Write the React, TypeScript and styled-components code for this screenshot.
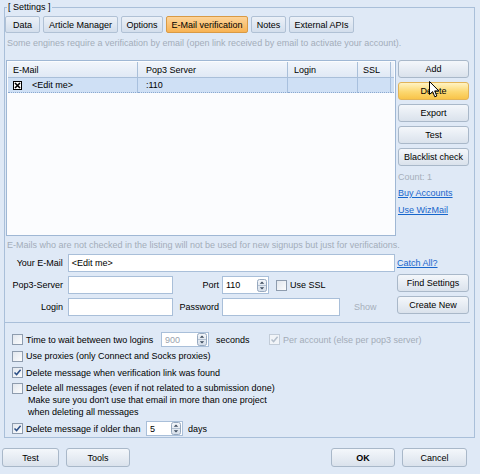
import React from "react";
import styled, { createGlobalStyle, css } from "styled-components";

const GlobalStyle = createGlobalStyle`
  html, body { margin: 0; padding: 0; }
  body {
    background: #dfe9f6;
    font-family: "Liberation Sans", Arial, sans-serif;
    font-size: 9px;
    color: #000;
  }
  * { box-sizing: border-box; }
`;

const Window = styled.div`
  width: 480px;
  height: 474px;
  overflow: hidden;
  display: flex;
  flex-direction: column;
  padding-top: 2px;
`;

const Group = styled.fieldset`
  margin: 0 5px 0 4px;
  padding: 0;
  min-width: 0;
  height: 436px;
  border: 1px solid #a9bfd9;
  display: flex;
  flex-direction: column;
`;

const Legend = styled.legend`
  margin-left: 2px;
  padding: 0 1px;
  line-height: 11px;
  font-size: 9px;
`;

const TabBar = styled.div`
  display: flex;
  gap: 3px;
  margin-top: 3px;
  height: 17px;
`;

const Tab = styled.div<{ $w: number; $active?: boolean }>`
  width: ${(p) => p.$w}px;
  height: 17px;
  display: flex;
  align-items: center;
  justify-content: center;
  border: 1px solid #b0c1d5;
  border-radius: 2px;
  background: linear-gradient(#ecf1f8, #d3deec);
  white-space: nowrap;
  ${(p) =>
    p.$active &&
    css`
      border-color: #d99a45;
      background: linear-gradient(#fdd49a, #f8b354);
    `}
`;

const Hint = styled.div<{ $mt: number }>`
  margin: ${(p) => p.$mt}px 0 0 2px;
  line-height: 12px;
  color: #a3adba;
  white-space: nowrap;
`;

const MainRow = styled.div`
  display: flex;
  margin: 11px 0 0 1px;
  height: 176px;
  gap: 2px;
`;

const Table = styled.div`
  width: 390px;
  height: 176px;
  border: 1px solid #9fb7d4;
  background: #fbfcfe;
  padding: 1px;
  display: flex;
  flex-direction: column;
`;

const GridRow = styled.div<{ $header?: boolean }>`
  display: grid;
  grid-template-columns: 130px 150px 70px 33px 1fr;
  height: ${(p) => (p.$header ? 16 : 15)}px;
`;

const HeadCell = styled.div<{ $pad: number }>`
  display: flex;
  align-items: center;
  padding-left: ${(p) => p.$pad}px;
  border-right: 1px solid #a9bfd9;
  border-bottom: 1px solid #a9bfd9;
  background: linear-gradient(#f1f5fb, #e0e9f5);
`;

const HeadFill = styled.div`
  border-bottom: 1px solid #a9bfd9;
  background: linear-gradient(#f1f5fb, #e0e9f5);
`;

const Cell = styled.div<{ $pad: number }>`
  display: flex;
  align-items: center;
  gap: 10px;
  padding-left: ${(p) => p.$pad}px;
  background: #cfe0f5;
  border-right: 1px solid #a8c0de;
  border-bottom: 1px dotted #8aa8cf;
`;

const CellFill = styled.div`
  background: #cfe0f5;
  border-bottom: 1px dotted #8aa8cf;
`;

const XBox = styled.svg`
  width: 9px;
  height: 9px;
  flex: none;
`;

const SideCol = styled.div`
  width: 71px;
  display: flex;
  flex-direction: column;
`;

const Button = styled.div<{ $w?: number; $h?: number; $hot?: boolean; $bold?: boolean }>`
  position: relative;
  width: ${(p) => (p.$w ? `${p.$w}px` : "100%")};
  height: ${(p) => p.$h ?? 18}px;
  display: flex;
  align-items: center;
  justify-content: center;
  border: 1px solid #a9b8c9;
  border-radius: 3px;
  background: linear-gradient(#f4f7fb, #dae2ec);
  white-space: nowrap;
  font-weight: ${(p) => (p.$bold ? 700 : 400)};
  ${(p) =>
    p.$hot &&
    css`
      border-color: #e2b458;
      background: linear-gradient(#fff3c4, #fcd870 55%, #f8c449);
    `}
`;

const ButtonStack = styled.div`
  display: flex;
  flex-direction: column;
  gap: 4px;
`;

const Muted = styled.div<{ $mt?: number }>`
  margin-top: ${(p) => p.$mt ?? 0}px;
  color: #a6afbb;
  line-height: 11px;
`;

const Link = styled.a<{ $mt?: number }>`
  display: block;
  margin-top: ${(p) => p.$mt ?? 0}px;
  color: #1766cc;
  text-decoration: underline;
  line-height: 11px;
  white-space: nowrap;
`;

const Cursor = styled.svg`
  position: absolute;
  left: 30px;
  top: -2px;
  width: 11px;
  height: 17px;
`;

const FormArea = styled.div`
  display: flex;
  gap: 2px;
  margin-top: 3px;
`;

const FormRows = styled.div`
  width: 390px;
  display: flex;
  flex-direction: column;
  gap: 4px;
`;

const FormRow = styled.div`
  display: flex;
  align-items: center;
  height: 18px;
`;

const Label = styled.div<{ $w: number; $gap: number }>`
  width: ${(p) => p.$w}px;
  margin-right: ${(p) => p.$gap}px;
  text-align: right;
  white-space: nowrap;
`;

const TextBox = styled.div<{ $w: number }>`
  width: ${(p) => p.$w}px;
  height: 18px;
  border: 1px solid #a9bfd9;
  background: #fff;
  display: flex;
  align-items: center;
  padding-left: 3px;
  white-space: nowrap;
`;

const SpinBox = styled.div<{ $w: number; $h?: number; $dim?: boolean }>`
  width: ${(p) => p.$w}px;
  height: ${(p) => p.$h ?? 18}px;
  border: 1px solid #a9bfd9;
  background: #fff;
  display: flex;
  align-items: center;
  padding: 0 1px 0 3px;
  color: ${(p) => (p.$dim ? "#9aa3ae" : "#000")};
`;

const SpinValue = styled.span`
  flex: 1;
`;

const Spinner = styled.svg`
  width: 10px;
  height: 13px;
  flex: none;
`;

const SideForm = styled.div`
  width: 72px;
  display: flex;
  flex-direction: column;
`;

const LinkRow = styled.div`
  height: 18px;
  display: flex;
  align-items: center;
  margin-bottom: 2px;
`;

const CheckWrap = styled.label<{ $ml?: number; $disabled?: boolean }>`
  display: flex;
  align-items: center;
  gap: 3px;
  margin-left: ${(p) => p.$ml ?? 0}px;
  color: ${(p) => (p.$disabled ? "#a3acb8" : "#000")};
  white-space: nowrap;
`;

const Box = styled.span<{ $disabled?: boolean }>`
  width: 11px;
  height: 11px;
  flex: none;
  border: 1px solid ${(p) => (p.$disabled ? "#c2ccd8" : "#8e9cae")};
  background: ${(p) => (p.$disabled ? "#f1f4f8" : "linear-gradient(135deg, #e2e7ee, #fbfcfd)")};
  display: flex;
  align-items: center;
  justify-content: center;
`;

const Divider = styled.div`
  height: 1px;
  background: #a9bfd9;
  margin: 6px 4px 0 0;
`;

const Options = styled.div`
  display: flex;
  flex-direction: column;
  margin: 8px 0 0 7px;
`;

const OptRow = styled.div<{ $h: number }>`
  display: flex;
  align-items: center;
  height: ${(p) => p.$h}px;
`;

const FixedText = styled.span<{ $w: number }>`
  width: ${(p) => p.$w}px;
  flex: none;
  white-space: nowrap;
`;

const MultiRow = styled.div`
  display: flex;
  align-items: flex-start;
  gap: 3px;
  margin-top: 1px;
  line-height: 12px;
`;

const BoxSlot = styled.span`
  padding-top: 1px;
  display: flex;
`;

const MultiText = styled.div`
  display: flex;
  flex-direction: column;
`;

const Indented = styled.span`
  padding-left: 2px;
`;

const BottomBar = styled.div`
  display: flex;
  align-items: center;
  margin: 10px 0 0 2px;
  gap: 7px;
`;

const Spacer = styled.div`
  flex: 1;
`;

const Check = ({ disabled }: { disabled?: boolean }) => (
  <svg width="9" height="9" viewBox="0 0 9 9">
    <path d="M1.5 4.5 L3.6 6.6 L7.6 1.8" fill="none" stroke={disabled ? "#b4bfcc" : "#2c4f86"} strokeWidth="1.5" />
  </svg>
);

const CheckBox = ({
  checked,
  disabled,
  children,
  ml,
}: {
  checked?: boolean;
  disabled?: boolean;
  children?: React.ReactNode;
  ml?: number;
}) => (
  <CheckWrap $ml={ml} $disabled={disabled}>
    <Box $disabled={disabled}>{checked && <Check disabled={disabled} />}</Box>
    {children}
  </CheckWrap>
);

const SpinArrows = () => (
  <Spinner viewBox="0 0 10 13">
    <defs>
      <linearGradient id="sg" x1="0" y1="0" x2="0" y2="1">
        <stop offset="0" stopColor="#f3f6fa" />
        <stop offset="1" stopColor="#d5dee9" />
      </linearGradient>
    </defs>
    <rect x="0.5" y="0.5" width="9" height="12" rx="2" fill="url(#sg)" stroke="#97a9bf" />
    <line x1="1" y1="6.5" x2="9" y2="6.5" stroke="#b3c1d2" />
    <path d="M2.8 4.8 L5 2.6 L7.2 4.8 Z" fill="#3b4a5c" />
    <path d="M2.8 8.2 L5 10.4 L7.2 8.2 Z" fill="#3b4a5c" />
  </Spinner>
);

const Spin = ({ w, h, value, dim }: { w: number; h?: number; value: string; dim?: boolean }) => (
  <SpinBox $w={w} $h={h} $dim={dim}>
    <SpinValue>{value}</SpinValue>
    <SpinArrows />
  </SpinBox>
);

export default function App() {
  return (
    <>
      <GlobalStyle />
      <Window>
        <Group>
          <Legend>[ Settings ]</Legend>
          <TabBar>
            <Tab $w={35}>Data</Tab>
            <Tab $w={75}>Article Manager</Tab>
            <Tab $w={42}>Options</Tab>
            <Tab $w={82} $active>
              E-Mail verification
            </Tab>
            <Tab $w={35}>Notes</Tab>
            <Tab $w={65}>External APIs</Tab>
          </TabBar>
          <Hint $mt={4}>
            Some engines require a verification by email (open link received by email to activate your account).
          </Hint>
          <MainRow>
            <Table>
              <GridRow $header>
                <HeadCell $pad={5}>E-Mail</HeadCell>
                <HeadCell $pad={8}>Pop3 Server</HeadCell>
                <HeadCell $pad={6}>Login</HeadCell>
                <HeadCell $pad={5}>SSL</HeadCell>
                <HeadFill />
              </GridRow>
              <GridRow>
                <Cell $pad={5}>
                  <XBox viewBox="0 0 9 9">
                    <rect x="0.5" y="0.5" width="8" height="8" fill="#fff" stroke="#000" />
                    <path d="M2 2 L7 7 M7 2 L2 7" stroke="#000" strokeWidth="1.6" />
                  </XBox>
                  &lt;Edit me&gt;
                </Cell>
                <Cell $pad={8}>:110</Cell>
                <Cell $pad={6} />
                <Cell $pad={5} />
                <CellFill />
              </GridRow>
            </Table>
            <SideCol>
              <ButtonStack>
                <Button>Add</Button>
                <Button $hot>
                  Delete
                  <Cursor viewBox="0 0 11 17">
                    <path
                      d="M0.5 0.5 L0.5 13.5 L3.6 10.6 L5.8 15.8 L7.8 15 L5.7 9.9 L9.8 9.9 Z"
                      fill="#fff"
                      stroke="#000"
                      strokeWidth="1"
                      strokeLinejoin="round"
                    />
                  </Cursor>
                </Button>
                <Button>Export</Button>
                <Button>Test</Button>
                <Button>Blacklist check</Button>
              </ButtonStack>
              <Muted $mt={6}>Count: 1</Muted>
              <Link $mt={5}>Buy Accounts</Link>
              <Link $mt={6}>Use WizMail</Link>
            </SideCol>
          </MainRow>
          <Hint $mt={3}>E-Mails who are not checked in the listing will not be used for new signups but just for verifications.</Hint>
          <FormArea>
            <FormRows>
              <FormRow>
                <Label $w={58} $gap={5}>Your E-Mail</Label>
                <TextBox $w={328}>&lt;Edit me&gt;</TextBox>
              </FormRow>
              <FormRow>
                <Label $w={58} $gap={5}>Pop3-Server</Label>
                <TextBox $w={105} />
                <Label $w={46} $gap={3}>Port</Label>
                <Spin w={47} value="110" />
                <CheckBox ml={7}>Use SSL</CheckBox>
              </FormRow>
              <FormRow>
                <Label $w={58} $gap={5}>Login</Label>
                <TextBox $w={105} />
                <Label $w={46} $gap={3}>Password</Label>
                <TextBox $w={118} />
                <Muted $mt={0} style={{ marginLeft: 14 }}>Show</Muted>
              </FormRow>
            </FormRows>
            <SideForm>
              <LinkRow>
                <Link>Catch All?</Link>
              </LinkRow>
              <ButtonStack>
                <Button>Find Settings</Button>
                <Button>Create New</Button>
              </ButtonStack>
            </SideForm>
          </FormArea>
          <Divider />
          <Options>
            <OptRow $h={17}>
              <CheckBox>
                <FixedText $w={135}>Time to wait between two logins</FixedText>
              </CheckBox>
              <Spin w={48} h={15} value="900" dim />
              <FixedText $w={53} style={{ marginLeft: 7 }}>seconds</FixedText>
              <CheckBox checked disabled>
                Per account (else per pop3 server)
              </CheckBox>
            </OptRow>
            <OptRow $h={16}>
              <CheckBox>Use proxies (only Connect and Socks proxies)</CheckBox>
            </OptRow>
            <OptRow $h={17}>
              <CheckBox checked>Delete message when verification link was found</CheckBox>
            </OptRow>
            <MultiRow>
              <BoxSlot>
                <Box />
              </BoxSlot>
              <MultiText>
                <span>Delete all messages (even if not related to a submission done)</span>
                <Indented>Make sure you don't use that email in more than one project</Indented>
                <Indented>when deleting all messages</Indented>
              </MultiText>
            </MultiRow>
            <OptRow $h={17} style={{ marginTop: 2 }}>
              <CheckBox checked>
                <FixedText $w={120}>Delete message if older than</FixedText>
              </CheckBox>
              <Spin w={37} h={15} value="5" />
              <FixedText $w={40} style={{ marginLeft: 5 }}>days</FixedText>
            </OptRow>
          </Options>
        </Group>
        <BottomBar>
          <Button $w={57} $h={19}>Test</Button>
          <Button $w={64} $h={19}>Tools</Button>
          <Spacer />
          <Button $w={64} $h={19} $bold>OK</Button>
          <Button $w={65} $h={19} style={{ marginRight: 13 }}>Cancel</Button>
        </BottomBar>
      </Window>
    </>
  );
}
